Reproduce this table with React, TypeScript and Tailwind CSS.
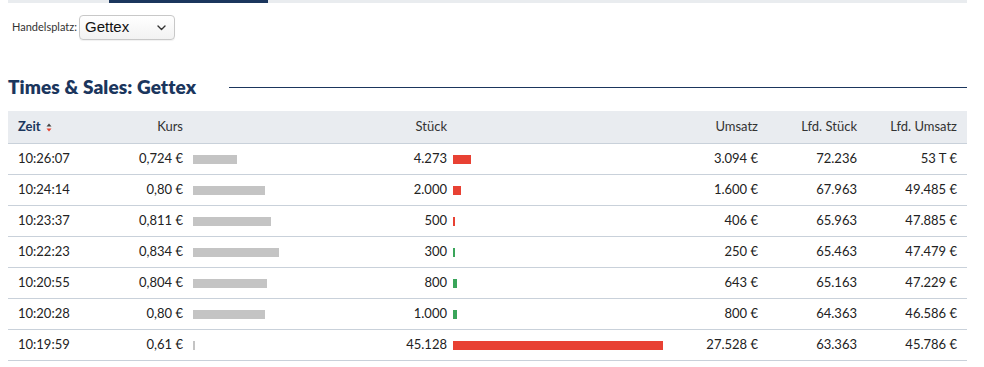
import React from "react";

type Row = {
  zeit: string;
  kurs: string;
  kursBar: number;
  stueck: string;
  stBar: number;
  color: "red" | "green";
  umsatz: string;
  lfdStueck: string;
  lfdUmsatz: string;
};

const rows: Row[] = [
  { zeit: "10:26:07", kurs: "0,724 €", kursBar: 44, stueck: "4.273", stBar: 18, color: "red", umsatz: "3.094 €", lfdStueck: "72.236", lfdUmsatz: "53 T €" },
  { zeit: "10:24:14", kurs: "0,80 €", kursBar: 72, stueck: "2.000", stBar: 8, color: "red", umsatz: "1.600 €", lfdStueck: "67.963", lfdUmsatz: "49.485 €" },
  { zeit: "10:23:37", kurs: "0,811 €", kursBar: 78, stueck: "500", stBar: 2, color: "red", umsatz: "406 €", lfdStueck: "65.963", lfdUmsatz: "47.885 €" },
  { zeit: "10:22:23", kurs: "0,834 €", kursBar: 86, stueck: "300", stBar: 2, color: "green", umsatz: "250 €", lfdStueck: "65.463", lfdUmsatz: "47.479 €" },
  { zeit: "10:20:55", kurs: "0,804 €", kursBar: 74, stueck: "800", stBar: 4, color: "green", umsatz: "643 €", lfdStueck: "65.163", lfdUmsatz: "47.229 €" },
  { zeit: "10:20:28", kurs: "0,80 €", kursBar: 72, stueck: "1.000", stBar: 4, color: "green", umsatz: "800 €", lfdStueck: "64.363", lfdUmsatz: "46.586 €" },
  { zeit: "10:19:59", kurs: "0,61 €", kursBar: 2, stueck: "45.128", stBar: 210, color: "red", umsatz: "27.528 €", lfdStueck: "63.363", lfdUmsatz: "45.786 €" },
];

const grid = "grid grid-cols-[120px_60px_200px_64px_216px_100px_99px_100px] items-center";

export default function App() {
  return (
    <div className="w-[984px] h-[367px] bg-white overflow-hidden text-[#222]" style={{ fontFamily: "Lato, 'Open Sans', sans-serif" }}>
      {/* top tab bar */}
      <div className="ml-2 w-[959px] h-[3px] bg-[#e9ecef] flex">
        <div className="ml-[101px] w-[159px] h-full bg-[#1b365d]" />
      </div>

      {/* Handelsplatz */}
      <div className="mt-[12px] ml-3 flex items-center gap-[2px]">
        <span className="text-[11px] text-[#333]">Handelsplatz:</span>
        <div className="w-[96px] h-[25px] rounded-[4px] border border-[#c8c8c8] bg-gradient-to-b from-white to-[#f2f2f2] flex items-center justify-between pl-[5px] pr-[8px] shadow-[0_1px_1px_rgba(0,0,0,0.06)]">
          <span className="text-[15px] text-[#111]" style={{ fontFamily: "'Liberation Sans', Arial, sans-serif" }}>Gettex</span>
          <svg width="9" height="6" viewBox="0 0 9 6" fill="none">
            <path d="M1 1l3.5 3.5L8 1" stroke="#333" strokeWidth="1.4" strokeLinecap="round" strokeLinejoin="round" />
          </svg>
        </div>
      </div>

      {/* heading */}
      <div className="mt-[37px] ml-2 w-[959px] flex items-center">
        <h2 className="text-[19px] font-extrabold text-[#1b365d] leading-none tracking-[0.1px]">Times &amp; Sales: Gettex</h2>
        <div className="flex-1 ml-[33px] mt-[1px] h-px bg-[#1b365d]" />
      </div>

      {/* table */}
      <div className="mt-[15px] ml-2 w-[959px] text-[13px]">
        <div className={`${grid} h-[33px] bg-[#e9ecf0] border-b border-[#c9d1da] text-[#333]`}>
          <div className="pl-[10px] flex items-center gap-[5px] font-bold text-[#1b365d]">
            <span>Zeit</span>
            <svg width="6" height="9" viewBox="0 0 6 9">
              <path d="M3 0.5L5.5 3.5H0.5z" fill="#444" />
              <path d="M3 8.5L5.5 5.5H0.5z" fill="#e8402f" />
            </svg>
          </div>
          <div className="text-right pr-[5px]">Kurs</div>
          <div />
          <div className="text-right pr-[5px]">Stück</div>
          <div />
          <div className="text-right pr-[10px]">Umsatz</div>
          <div className="text-right pr-[10px]">Lfd. Stück</div>
          <div className="text-right pr-[10px]">Lfd. Umsatz</div>
        </div>
        {rows.map((r) => (
          <div key={r.zeit} className={`${grid} h-[31px] border-b border-[#c9d1da]`}>
            <div className="pl-[10px]">{r.zeit}</div>
            <div className="text-right pr-[5px] whitespace-nowrap">{r.kurs}</div>
            <div className="pl-[5px] flex">
              <div className="h-[9px] bg-[#c4c4c4]" style={{ width: r.kursBar }} />
            </div>
            <div className="text-right pr-[5px]">{r.stueck}</div>
            <div className="pl-[1px] flex">
              <div className={`h-[9px] ${r.color === "red" ? "bg-[#e84133]" : "bg-[#3aa55a]"}`} style={{ width: r.stBar }} />
            </div>
            <div className="text-right pr-[10px]">{r.umsatz}</div>
            <div className="text-right pr-[10px]">{r.lfdStueck}</div>
            <div className="text-right pr-[10px]">{r.lfdUmsatz}</div>
          </div>
        ))}
      </div>
    </div>
  );
}
